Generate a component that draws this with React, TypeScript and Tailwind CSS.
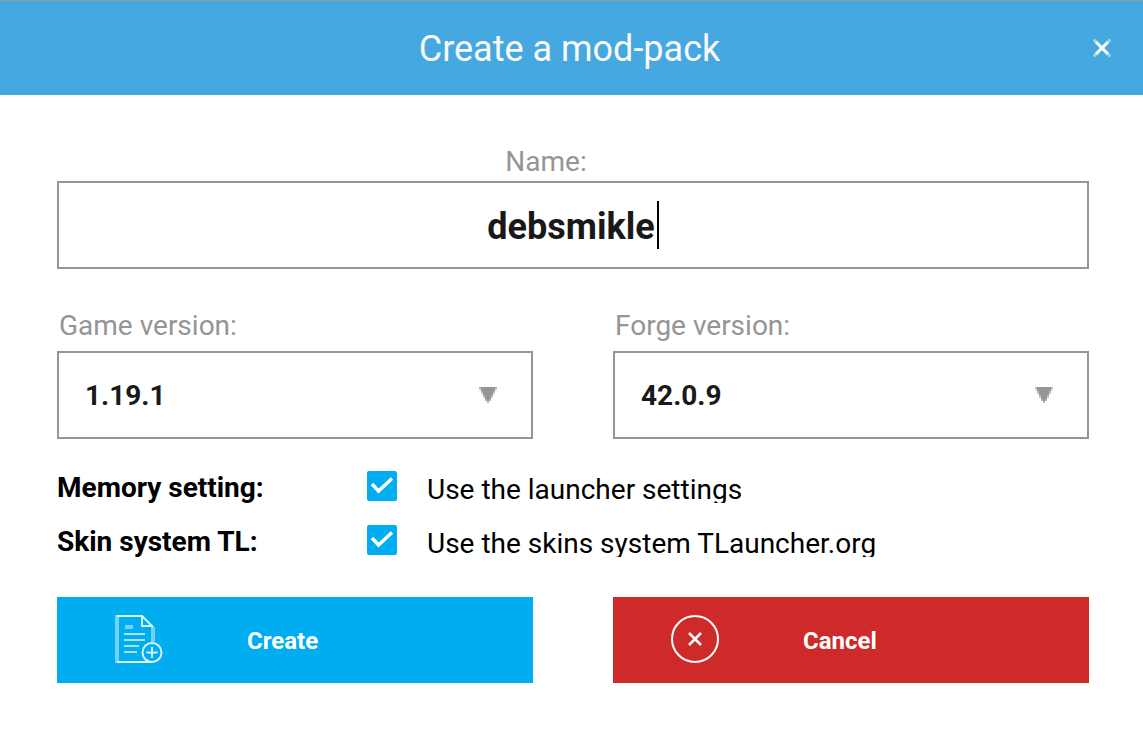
import { useState } from "react";

function Arrow() {
  return (
    <svg className="pointer-events-none absolute top-9 right-9 h-4 w-[18px]" viewBox="0 0 18 16" fill="#959595" shapeRendering="crispEdges" aria-hidden="true">
      <path d="M2 0H16V4H14V8H12V12H10V14H8V12H6V8H4V4H2Z" />
      <path opacity="0.7" d="M0 0H2V2H0ZM16 0H18V2H16ZM2 4H4V6H2ZM14 4H16V6H14ZM4 8H6V10H4ZM12 8H14V10H12ZM6 12H8V14H6ZM10 12H12V14H10ZM8 14H10V16H8Z" />
      <path opacity="0.25" d="M0 2H2V4H0ZM16 2H18V4H16ZM2 6H4V8H2ZM14 6H16V8H14ZM4 10H6V12H4ZM12 10H14V12H12Z" />
    </svg>
  );
}

function Version({ id, label, value }: { id: string; label: string; value: string }) {
  return (
    <div className="min-w-0 flex-1">
      <label htmlFor={id} className="block h-10 pl-0.5 text-[28px] leading-[30px] text-[#959595]">{label}</label>
      <div className="relative">
        <select id={id} className="h-22 w-full appearance-none border-2 border-[#959595] bg-white px-[26px] pt-0.5 text-[28px] font-bold text-[#191919] outline-none">
          <option>{value}</option>
        </select>
        <Arrow />
      </div>
    </div>
  );
}

function Setting({ id, title, text }: { id: string; title: string; text: string }) {
  const [on, setOn] = useState(true);
  return (
    <div className="flex h-8 items-start">
      <span className="w-[310px] text-[28px] leading-[34px] font-bold text-black">{title}</span>
      <span className="relative flex size-[30px]">
        <input id={id} type="checkbox" checked={on} onChange={() => setOn(!on)} className="size-[30px] appearance-none rounded-xs bg-[#00adf0]" />
        {on && (
          <svg className="pointer-events-none absolute inset-0" viewBox="0 0 30 30" fill="none" stroke="#fff" strokeWidth="3.4" aria-hidden="true">
            <path d="M5 13L11.5 20L25 7.500" />
          </svg>
        )}
      </span>
      <label htmlFor={id} className="h-8 overflow-hidden pl-[30px] text-[28px] leading-[38px] text-black">{text}</label>
    </div>
  );
}

export default function App() {
  const [name, setName] = useState("debsmikle");
  return (
    <main className="min-h-screen bg-white font-[Roboto,sans-serif]">
      <header className="grid h-[95px] grid-cols-[1fr_auto_1fr] items-center border-t border-[#999] bg-[#46a8e0] text-[#fafafa]">
        <h1 className="col-start-2 pt-0.5 pr-1 text-4xl">Create a mod-pack</h1>
        <button type="button" aria-label="Close" className="mr-8 justify-self-end">
          <svg className="size-[18px]" viewBox="0 0 18 18" stroke="currentColor" aria-hidden="true">
            <path strokeWidth="3" opacity="0.5" d="M0.500 0.500L17.500 17.500M17.500 0.500L0.500 17.500" />
            <path strokeWidth="3" d="M3 3L15 15M15 3L3 15" />
          </svg>
        </button>
      </header>
      <form className="pt-[52px] pr-[54px] pl-[57px]" onSubmit={(e) => e.preventDefault()}>
        <label htmlFor="name" className="block h-[34px] pr-[54px] text-center text-[28px] leading-[30px] text-[#959595]">Name:</label>
        <div className="flex h-22 items-center justify-center border-2 border-[#959595]">
          <input id="name" value={name} onChange={(e) => setName(e.target.value)} className="field-sizing-content pt-1 text-4xl font-bold text-[#191919] outline-none" />
          <span className="ml-0.5 h-12 w-0.5 bg-black" />
        </div>
        <div className="mt-[42px] flex gap-20">
          <Version id="game" label="Game version:" value="1.19.1" />
          <Version id="forge" label="Forge version:" value="42.0.9" />
        </div>
        <div className="mt-8 flex flex-col gap-[22px]">
          <Setting id="memory" title="Memory setting:" text="Use the launcher settings" />
          <Setting id="skins" title="Skin system TL:" text="Use the skins system TLauncher.org" />
        </div>
        <div className="mt-10 flex gap-20 text-2xl font-bold text-white">
          <button type="button" className="flex h-[86px] flex-1 items-center bg-[#00adf0] pb-0.5 pl-[58px]">
            <svg className="size-12" viewBox="0 0 48 48" fill="none" stroke="currentColor" strokeWidth="2" aria-hidden="true">
              <path opacity="0.45" strokeWidth="4" d="M2 0V48M38 12V27M10 12H18" />
              <path opacity="0.85" d="M2 1H27V11H38M27 1L38 12M2 47H37" />
              <path opacity="0.65" d="M9 19H30M9 25H30M9 31H24M9 37H22" />
              <circle opacity="0.85" cx="37" cy="37.500" r="9.500" />
              <path opacity="0.8" d="M37 32V43M31.500 37.500H42.500" />
            </svg>
            <span className="pt-1 pl-[84px]">Create</span>
          </button>
          <button type="button" className="flex h-[86px] flex-1 items-center bg-[#ce2a2a] pb-0.5 pl-[58px]">
            <svg className="size-12" viewBox="0 0 48 48" fill="none" stroke="currentColor" strokeWidth="2" aria-hidden="true">
              <circle cx="24" cy="24" r="23" />
              <path strokeWidth="2.500" d="M18 18L30 30M30 18L18 30" />
            </svg>
            <span className="pt-1 pl-[84px]">Cancel</span>
          </button>
        </div>
      </form>
    </main>
  );
}
